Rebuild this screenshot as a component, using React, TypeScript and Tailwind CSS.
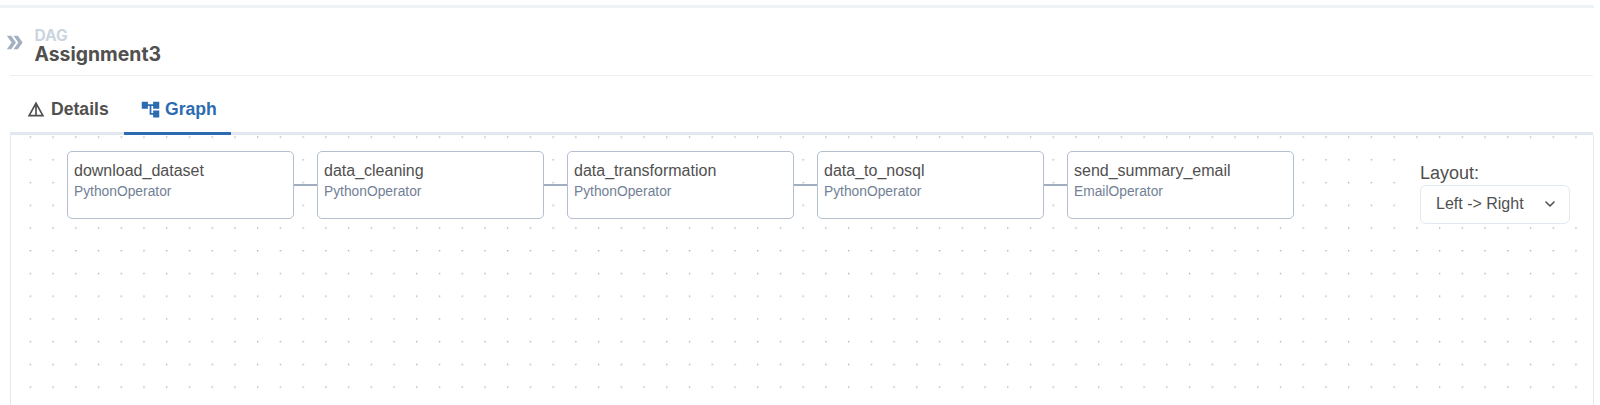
import React from "react";
import { MdAccountTree, MdDetails, MdDoubleArrow } from "react-icons/md";
import { FiChevronDown } from "react-icons/fi";

const tasks = [
  { id: "download_dataset", operator: "PythonOperator" },
  { id: "data_cleaning", operator: "PythonOperator" },
  { id: "data_transformation", operator: "PythonOperator" },
  { id: "data_to_nosql", operator: "PythonOperator" },
  { id: "send_summary_email", operator: "EmailOperator" },
];

function Header() {
  return (
    <header className="flex h-[67px] items-start">
      <MdDoubleArrow className="mt-[23px] ml-[3px] h-[23px] w-[23px] shrink-0 text-[#a3b0c2]" />
      <div className="ml-[8.5px] pt-[18px] font-['Inter',sans-serif] font-bold">
        <div className="text-[15.6px] leading-[19px] text-[#cbd5e0]">DAG</div>
        <h1 className="text-[19.4px] leading-[19px] text-[#51504f]">Assignment3</h1>
      </div>
    </header>
  );
}

function Tabs() {
  return (
    <nav className="ml-[10px] flex h-[60px] w-[1583px] border-t border-[#edf0f3] border-b-[3px] border-b-[#e2e8f0] font-['Liberation_Sans',Arial,sans-serif] text-[17.6px] font-bold">
      <button className="flex w-[114px] items-center pt-[10px] pl-[16px] text-[#51504f]">
        <MdDetails className="mr-[5px] h-[20px] w-[20px] shrink-0" />
        Details
      </button>
      <button className="-mb-[3px] flex w-[107px] items-center border-b-[3px] border-[#2b6cb0] pt-[10px] pl-[16px] text-[#2b6cb0]">
        <MdAccountTree className="mr-[4px] h-[21px] w-[21px] shrink-0" />
        Graph
      </button>
    </nav>
  );
}

function Dots() {
  return (
    <svg className="absolute inset-0 h-full w-full">
      <defs>
        <pattern id="dots" x="18.7" y="1.4" width="22.73" height="22.73" patternUnits="userSpaceOnUse">
          <circle cx="0.7" cy="0.7" r="0.7" fill="#9a9aa3" />
        </pattern>
      </defs>
      <rect width="100%" height="100%" fill="url(#dots)" />
    </svg>
  );
}

export default function App() {
  return (
    <div className="h-[405px] w-[1600px] overflow-hidden bg-white font-['Liberation_Sans',Arial,sans-serif] text-[#51504f]">
      <div className="h-[8px] w-[1594px] border-b-[3px] border-[#edf2f7]" />
      <Header />
      <Tabs />
      <main className="relative ml-[10px] flex h-[270px] w-[1584px] items-start border-x border-[#e2e8f0]">
        <Dots />
        <div className="relative flex items-center pt-[16px] pl-[56px]">
          {tasks.map((task, i) => (
            <React.Fragment key={task.id}>
              {i > 0 && <div className="h-[2px] w-[23px] bg-[#a0aec0]" />}
              <div className="h-[68px] w-[227px] rounded-[5px] border border-[#b4bfcd] bg-white pt-[9px] pl-[6px]">
                <div className="text-[16px] leading-[19px]">{task.id}</div>
                <div className="mt-[2px] text-[13.8px] leading-[19px] text-[#718096]">{task.operator}</div>
              </div>
            </React.Fragment>
          ))}
        </div>
        <div className="relative mt-[14px] ml-[116px] bg-white px-[10px] pt-[13px]">
          <div className="text-[18px] leading-[23px]">Layout:</div>
          <button className="flex h-[39px] w-[150px] items-center justify-between rounded-[6px] border border-[#e2e8f0] bg-white pr-[11px] pb-[1px] pl-[15px] text-[16px]">
            Left -&gt; Right
            <FiChevronDown className="h-[16px] w-[16px]" strokeWidth={2.4} />
          </button>
        </div>
      </main>
    </div>
  );
}
